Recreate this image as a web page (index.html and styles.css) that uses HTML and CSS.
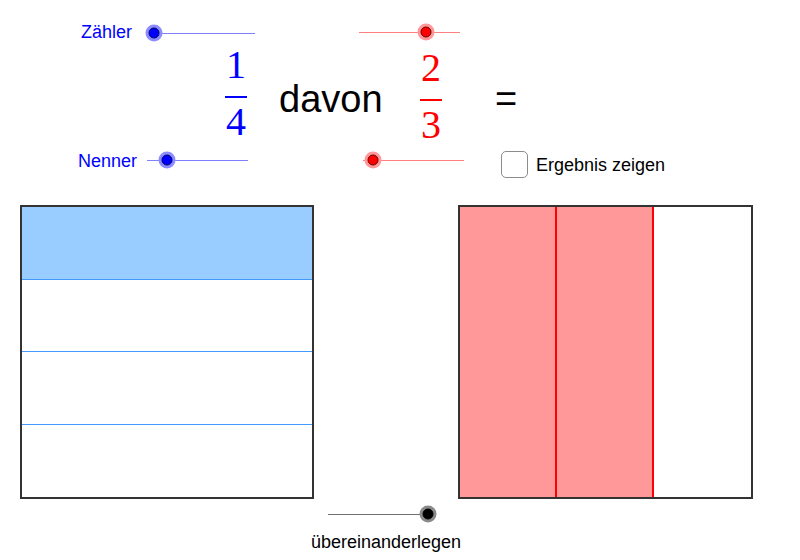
FILE: index.html
```html
<!DOCTYPE html>
<html lang="de">
<head>
    <meta charset="UTF-8">
    <meta name="viewport" content="width=device-width, initial-scale=1.0">
    <title>Bruchteil von einem Bruch</title>
    <link rel="stylesheet" href="styles.css">
</head>
<body>
    <div class="applet">
        <!-- Regler fuer den ersten Bruch -->
        <span class="label label-zaehler">Zähler</span>
        <div class="slider slider-blue s-zaehler"><span class="knob" style="left: 0px"></span></div>
        <span class="label label-nenner">Nenner</span>
        <div class="slider slider-blue s-nenner"><span class="knob" style="left: 20px"></span></div>

        <!-- Regler fuer den zweiten Bruch -->
        <div class="slider slider-red s-zaehler2"><span class="knob" style="left: 67px"></span></div>
        <div class="slider slider-red s-nenner2"><span class="knob" style="left: 10px"></span></div>

        <!-- Term -->
        <div class="frac frac-blue">
            <span class="num">1</span>
            <span class="bar"></span>
            <span class="den">4</span>
        </div>
        <span class="word">davon</span>
        <div class="frac frac-red">
            <span class="num">2</span>
            <span class="bar"></span>
            <span class="den">3</span>
        </div>
        <span class="equals">=</span>

        <label class="check">
            <span class="box"></span>
            <span class="check-text">Ergebnis zeigen</span>
        </label>

        <!-- Rechteckmodelle -->
        <div class="model model-rows">
            <div class="part filled"></div>
            <div class="part"></div>
            <div class="part"></div>
            <div class="part"></div>
        </div>
        <div class="model model-cols">
            <div class="part filled"></div>
            <div class="part filled"></div>
            <div class="part"></div>
        </div>

        <div class="slider slider-black s-stack"><span class="knob" style="left: 100px"></span></div>
        <span class="label label-stack">übereinanderlegen</span>
    </div>
</body>
</html>
```

FILE: styles.css
```css
body {
    margin: 0;
    background: #ffffff;
    font-family: 'Liberation Sans', Arial, sans-serif;
}
.applet {
    position: relative;
    width: 800px;
    height: 560px;
    overflow: hidden;
    background: #ffffff;
}

/* Beschriftungen */
.label {
    position: absolute;
    font-size: 18px;
    line-height: 20px;
    white-space: nowrap;
}
.label-zaehler {
    left: 81px;
    top: 22px;
    color: #0000ff;
}
.label-nenner {
    left: 78px;
    top: 151px;
    color: #0000ff;
}
.label-stack {
    left: 311px;
    top: 532px;
    color: #000000;
}

/* Schieberegler */
.slider {
    position: absolute;
    height: 1px;
}
.slider .knob {
    position: absolute;
    top: 0;
    width: 11px;
    height: 11px;
    box-sizing: border-box;
    border-radius: 50%;
    transform: translate(-50%, -50%);
}
.slider-blue {
    background: #8080ff;
}
.slider-blue .knob {
    background: #0000ff;
    border: 1px solid #000066;
    box-shadow: 0 0 0 3px #8c8cff;
}
.slider-red {
    background: #ff8080;
}
.slider-red .knob {
    background: #ff0000;
    border: 1px solid #660000;
    box-shadow: 0 0 0 3px #ff9999;
}
.slider-black {
    background: #707070;
}
.slider-black .knob {
    background: #000000;
    border: 1px solid #000000;
    box-shadow: 0 0 0 3px #8a8a8a;
}
.s-zaehler {
    left: 154px;
    top: 33px;
    width: 101px;
}
.s-nenner {
    left: 147px;
    top: 160px;
    width: 101px;
}
.s-zaehler2 {
    left: 359px;
    top: 32px;
    width: 101px;
}
.s-nenner2 {
    left: 363px;
    top: 160px;
    width: 101px;
}
.s-stack {
    left: 328px;
    top: 514px;
    width: 100px;
}

/* Brueche */
.frac {
    position: absolute;
    width: 22px;
    display: flex;
    flex-direction: column;
    align-items: center;
    font-family: 'Liberation Serif', 'Times New Roman', serif;
    font-size: 40px;
    line-height: 40px;
}
.frac .bar {
    align-self: stretch;
    height: 2px;
    margin: 11px 0 4px;
}
.frac-blue {
    left: 225px;
    top: 45px;
    color: #0000ff;
}
.frac-blue .bar {
    background: #0000ff;
}
.frac-red {
    left: 420px;
    top: 48px;
    color: #ff0000;
}
.frac-red .bar {
    background: #ff0000;
}
.word,
.equals {
    position: absolute;
    top: 80px;
    font-size: 38px;
    line-height: 38px;
    color: #000000;
}
.word {
    left: 279px;
}
.equals {
    left: 495px;
}

/* Kontrollkaestchen */
.check {
    position: absolute;
    left: 501px;
    top: 151px;
    display: flex;
    align-items: center;
    gap: 8px;
}
.check .box {
    width: 27px;
    height: 27px;
    box-sizing: border-box;
    border: 1.5px solid #8c8c8c;
    border-radius: 5px;
    background: #ffffff;
}
.check-text {
    font-size: 18px;
    line-height: 20px;
    color: #000000;
}

/* Rechteckmodelle */
.model {
    position: absolute;
    top: 205px;
    height: 294px;
    box-sizing: border-box;
    border: 2px solid #333333;
    display: grid;
    background: #ffffff;
}
.model-rows {
    left: 20px;
    width: 294px;
    grid-template-rows: repeat(4, 1fr);
}
.model-rows .part:not(:last-child) {
    border-bottom: 1.5px solid #4499ff;
}
.model-rows .filled {
    background: #99ccff;
}
.model-cols {
    left: 458px;
    width: 295px;
    grid-template-columns: repeat(3, 1fr);
}
.model-cols .filled {
    background: #ff9999;
    border-right: 2px solid #ff0000;
}
```
